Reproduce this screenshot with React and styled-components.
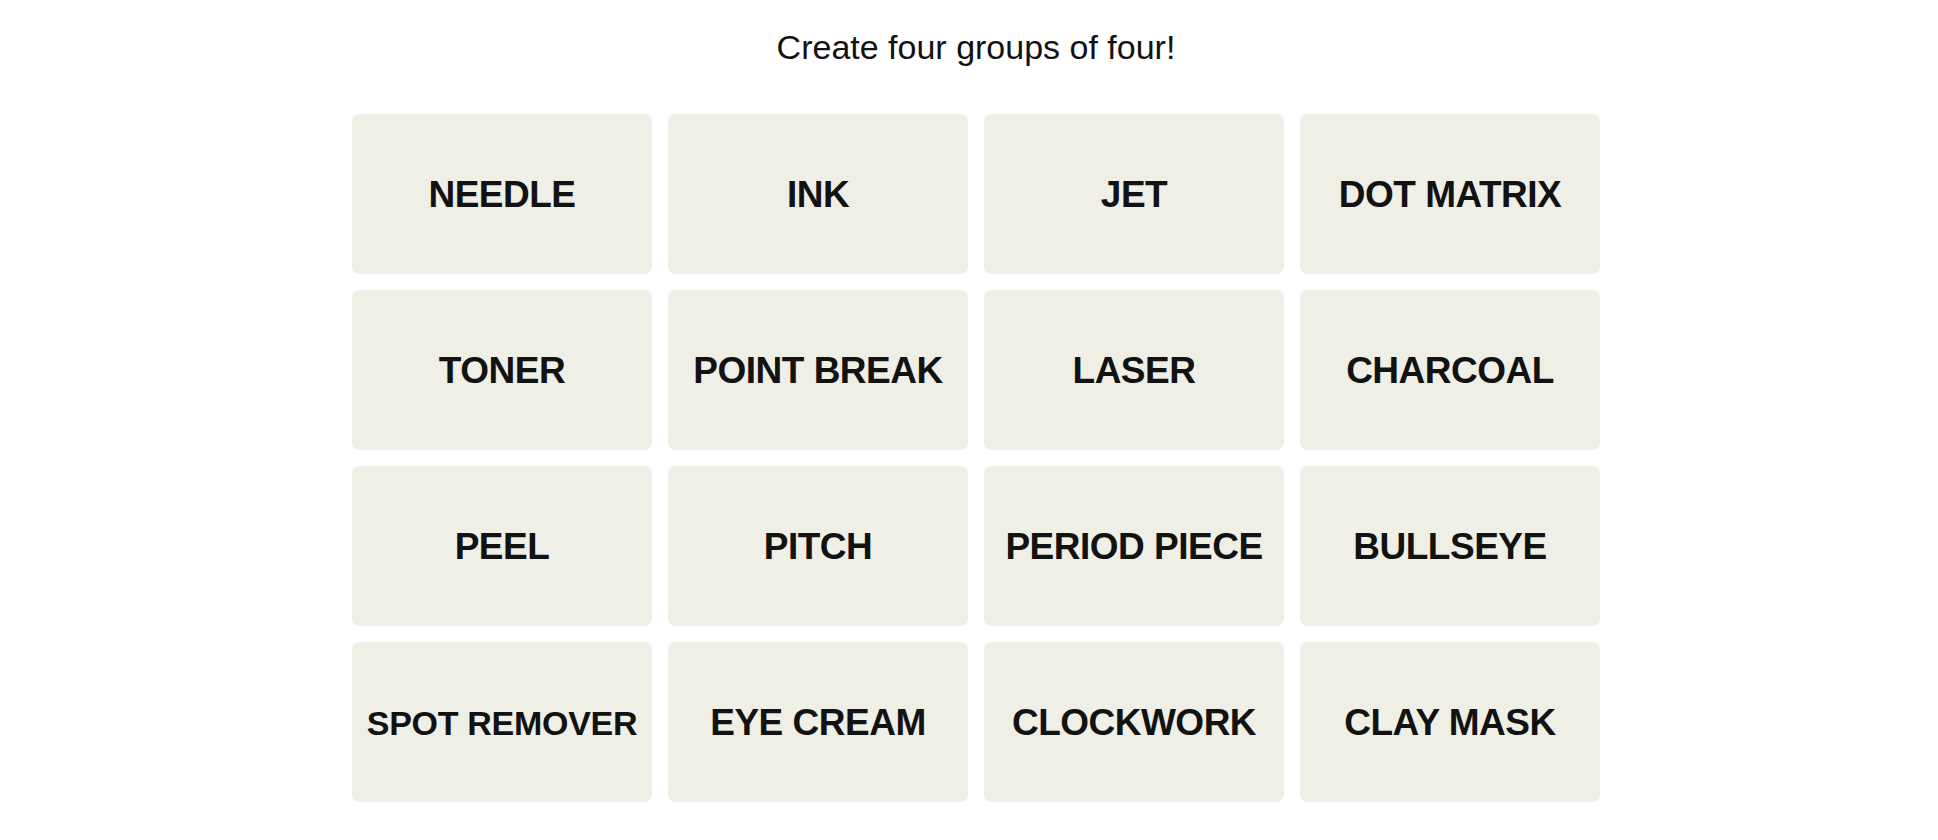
import React from "react";
import styled, { createGlobalStyle } from "styled-components";

const words = [
  ["NEEDLE"],
  ["INK"],
  ["JET"],
  ["DOT MATRIX"],
  ["TONER"],
  ["POINT BREAK"],
  ["LASER"],
  ["CHARCOAL"],
  ["PEEL"],
  ["PITCH"],
  ["PERIOD PIECE"],
  ["BULLSEYE"],
  ["SPOT REMOVER", true],
  ["EYE CREAM"],
  ["CLOCKWORK"],
  ["CLAY MASK"],
];

const App = () => {
  return (
    <Page>
      <GlobalStyle />
      <Title>Create four groups of four!</Title>
      <Board>
        {words.map(([word, small]) => (
          <Tile key={word} $small={small}>
            {word}
          </Tile>
        ))}
      </Board>
    </Page>
  );
};

const GlobalStyle = createGlobalStyle`
  body {
    margin: 0;
    background: #fff;
    font-family: "Liberation Sans", Arial, sans-serif;
  }
`;

const Page = styled.div`
  display: flex;
  flex-direction: column;
  align-items: center;
  padding-left: 14px;
`;

const Title = styled.h2`
  margin: 27px 0 0;
  height: 40px;
  line-height: 40px;
  font-family: "Liberation Sans", Arial, sans-serif;
  font-size: 34px;
  font-weight: 400;
  letter-spacing: 0;
  color: #121212;
`;

const Board = styled.div`
  margin-top: 47px;
  display: grid;
  grid-template-columns: repeat(4, 300px);
  grid-auto-rows: 160px;
  gap: 16px;
`;

const Tile = styled.button`
  display: flex;
  align-items: center;
  justify-content: center;
  border: none;
  border-radius: 8px;
  background: #efefe6;
  color: #121212;
  padding: 2px 0 0;
  font-family: "Liberation Sans", Arial, sans-serif;
  font-weight: 700;
  font-size: ${(p) => (p.$small ? "34px" : "37px")};
  letter-spacing: ${(p) => (p.$small ? "-0.3px" : "-0.5px")};
  text-transform: uppercase;
  white-space: nowrap;
  cursor: pointer;
`;

export default App;
